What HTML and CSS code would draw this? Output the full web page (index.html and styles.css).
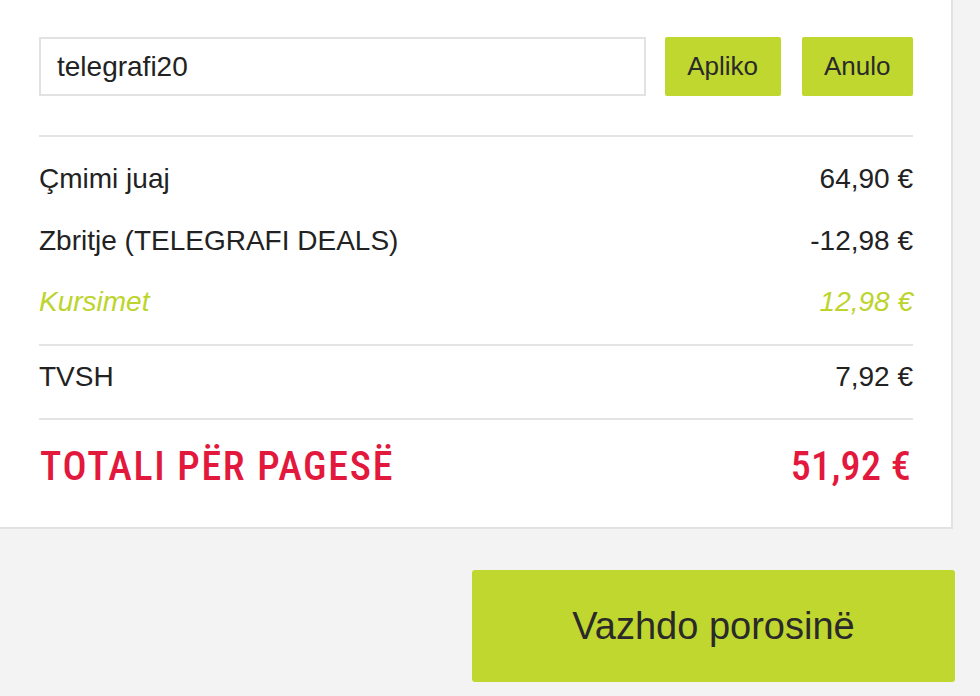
FILE: index.html
```html
<!DOCTYPE html>
<html lang="sq">
<head>
<meta charset="utf-8">
<title>Porosia</title>
<link rel="stylesheet" href="styles.css">
</head>
<body>
<div class="page">
  <div class="card">
    <div class="coupon">
      <input class="coupon-input" type="text" value="telegrafi20">
      <button class="btn" type="button">Apliko</button>
      <button class="btn" type="button">Anulo</button>
    </div>
    <div class="group summary">
      <div class="row"><span>Çmimi juaj</span><span>64,90 €</span></div>
      <div class="row"><span>Zbritje (TELEGRAFI DEALS)</span><span>-12,98 €</span></div>
      <div class="row savings"><span>Kursimet</span><span>12,98 €</span></div>
    </div>
    <div class="group vat">
      <div class="row"><span>TVSH</span><span>7,92 €</span></div>
    </div>
    <div class="group total">
      <span class="total-label">TOTALI PËR PAGESË</span><span class="total-amount">51,92 €</span>
    </div>
  </div>
  <div class="actions">
    <button class="btn-primary" type="button">Vazhdo porosinë</button>
  </div>
</div>
</body>
</html>
```
FILE: styles.css
```css
html, body {
  margin: 0;
  padding: 0;
}
body {
  background: #f3f3f3;
  font-family: "Liberation Sans", Arial, sans-serif;
  color: #222;
  overflow: hidden;
}
.page {
  width: 955px;
  margin-left: -2px;
  margin-top: -2px;
}
.card {
  background: #fff;
  border: 2px solid #e2e2e2;
  padding: 37px 38px 0 39px;
}
.coupon {
  display: flex;
  gap: 19px;
  padding-bottom: 39px;
}
.coupon-input {
  flex: 1;
  min-width: 0;
  height: 59px;
  box-sizing: border-box;
  border: 2px solid #e2e2e2;
  padding: 0 16px;
  font-family: "Liberation Sans", Arial, sans-serif;
  font-size: 28px;
  color: #222;
  outline: none;
  background: #fff;
}
.btn {
  height: 59px;
  border: none;
  border-radius: 2px;
  background: #c0d72f;
  color: #2a2a2a;
  padding: 0 22.5px;
  font-family: "Liberation Sans", Arial, sans-serif;
  font-size: 26px;
  cursor: pointer;
}
.btn + .btn {
  margin-left: 2px;
}
.group {
  border-top: 2px solid #e4e4e4;
}
.summary {
  padding: 11px 0;
}
.vat {
  padding: 0 0 10.5px;
}
.row {
  display: flex;
  justify-content: space-between;
  font-size: 28px;
  line-height: 61.5px;
  color: #222;
}
.savings {
  color: #bcd42c;
  font-style: italic;
}
.total {
  display: flex;
  justify-content: space-between;
  font-family: Roboto, "Noto Sans", sans-serif;
  font-weight: 500;
  font-size: 40px;
  line-height: 48px;
  color: #e2183d;
  padding: 23px 0 36.5px;
}
.total-label {
  font-stretch: 87.5%;
  letter-spacing: 1.7px;
  margin-left: 1px;
}
.total-amount {
  font-stretch: 87.5%;
  letter-spacing: 0.3px;
  margin-right: 2px;
}
.actions {
  display: flex;
  justify-content: flex-end;
  padding-top: 41px;
  margin-right: -2px;
}
.btn-primary {
  width: 483px;
  height: 112px;
  border: none;
  border-radius: 3px;
  background: #c0d72f;
  color: #2a2a2a;
  font-family: "Liberation Sans", Arial, sans-serif;
  font-size: 38px;
  cursor: pointer;
}
```
